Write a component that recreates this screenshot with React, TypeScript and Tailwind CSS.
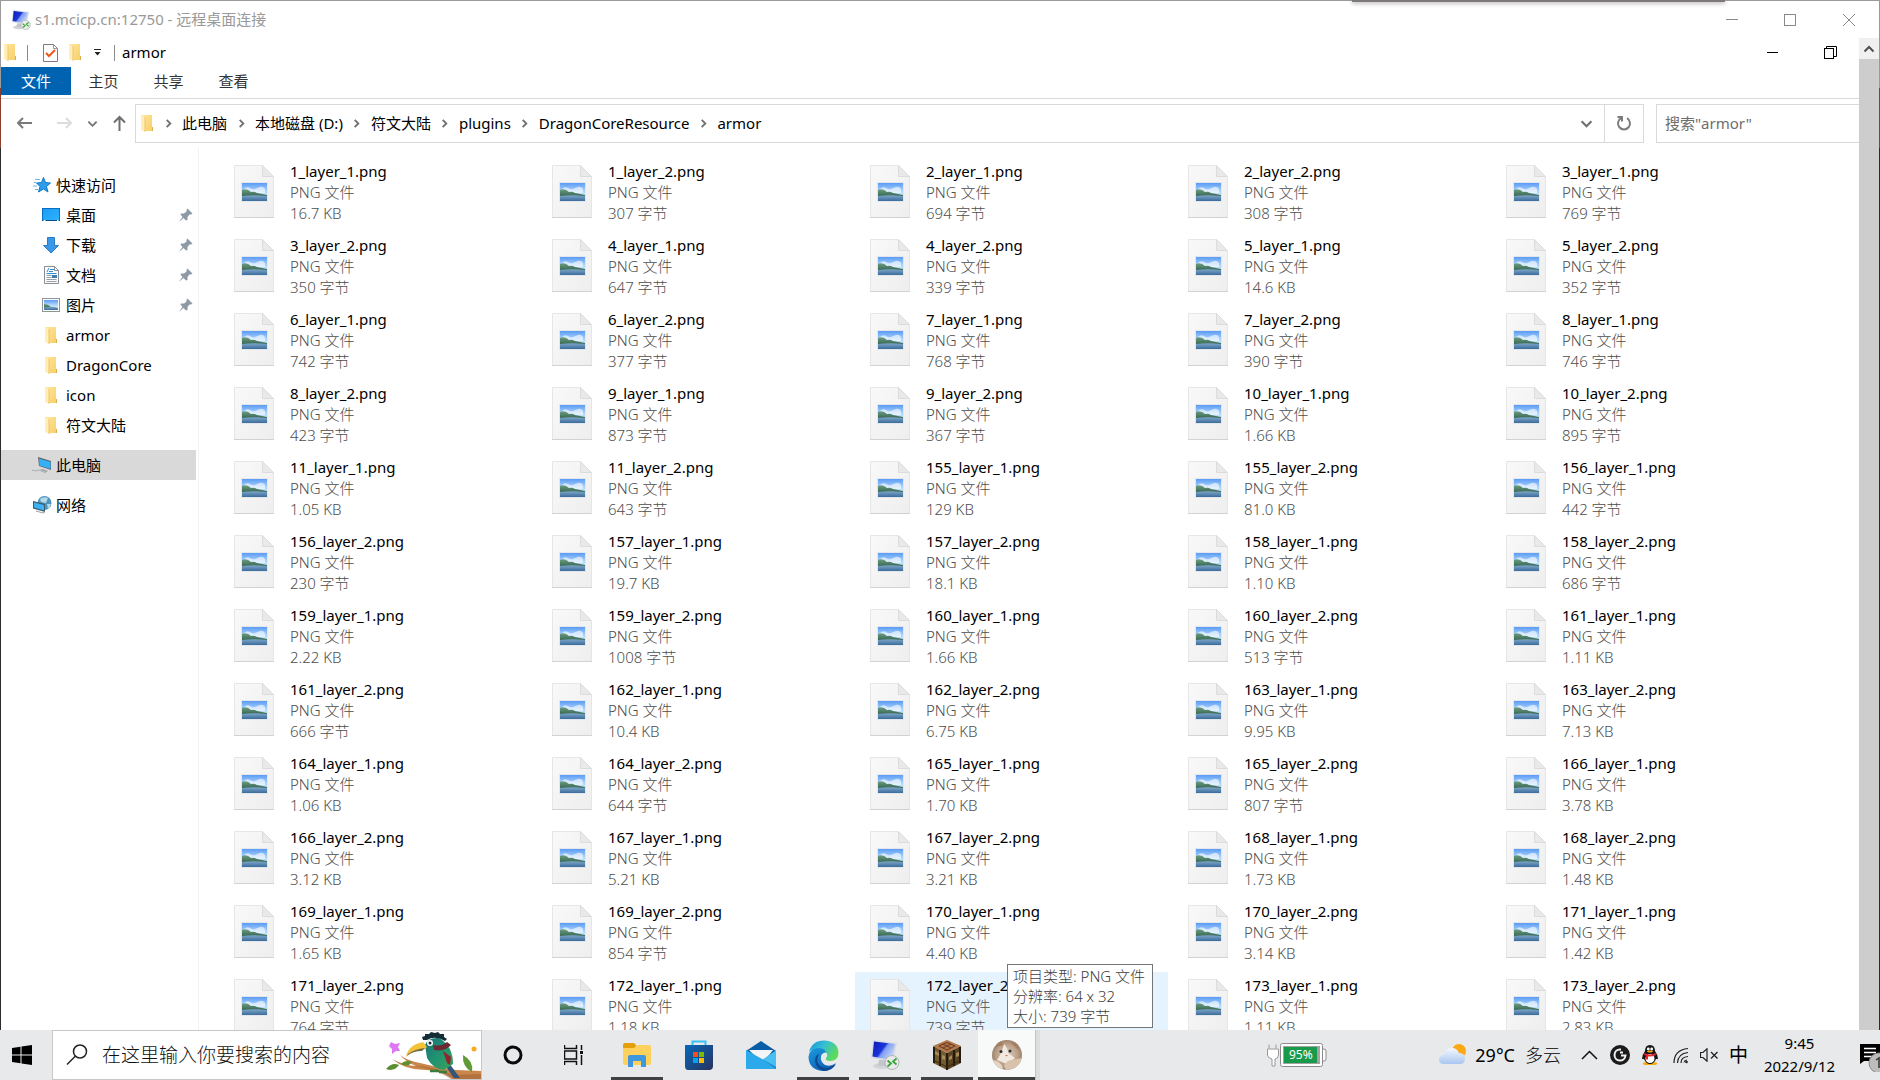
import type { ReactNode } from "react";

const FILES: [string, string][] = [
  ["1_layer_1.png", "16.7 KB"], ["1_layer_2.png", "307 字节"], ["2_layer_1.png", "694 字节"], ["2_layer_2.png", "308 字节"], ["3_layer_1.png", "769 字节"],
  ["3_layer_2.png", "350 字节"], ["4_layer_1.png", "647 字节"], ["4_layer_2.png", "339 字节"], ["5_layer_1.png", "14.6 KB"], ["5_layer_2.png", "352 字节"],
  ["6_layer_1.png", "742 字节"], ["6_layer_2.png", "377 字节"], ["7_layer_1.png", "768 字节"], ["7_layer_2.png", "390 字节"], ["8_layer_1.png", "746 字节"],
  ["8_layer_2.png", "423 字节"], ["9_layer_1.png", "873 字节"], ["9_layer_2.png", "367 字节"], ["10_layer_1.png", "1.66 KB"], ["10_layer_2.png", "895 字节"],
  ["11_layer_1.png", "1.05 KB"], ["11_layer_2.png", "643 字节"], ["155_layer_1.png", "129 KB"], ["155_layer_2.png", "81.0 KB"], ["156_layer_1.png", "442 字节"],
  ["156_layer_2.png", "230 字节"], ["157_layer_1.png", "19.7 KB"], ["157_layer_2.png", "18.1 KB"], ["158_layer_1.png", "1.10 KB"], ["158_layer_2.png", "686 字节"],
  ["159_layer_1.png", "2.22 KB"], ["159_layer_2.png", "1008 字节"], ["160_layer_1.png", "1.66 KB"], ["160_layer_2.png", "513 字节"], ["161_layer_1.png", "1.11 KB"],
  ["161_layer_2.png", "666 字节"], ["162_layer_1.png", "10.4 KB"], ["162_layer_2.png", "6.75 KB"], ["163_layer_1.png", "9.95 KB"], ["163_layer_2.png", "7.13 KB"],
  ["164_layer_1.png", "1.06 KB"], ["164_layer_2.png", "644 字节"], ["165_layer_1.png", "1.70 KB"], ["165_layer_2.png", "807 字节"], ["166_layer_1.png", "3.78 KB"],
  ["166_layer_2.png", "3.12 KB"], ["167_layer_1.png", "5.21 KB"], ["167_layer_2.png", "3.21 KB"], ["168_layer_1.png", "1.73 KB"], ["168_layer_2.png", "1.48 KB"],
  ["169_layer_1.png", "1.65 KB"], ["169_layer_2.png", "854 字节"], ["170_layer_1.png", "4.40 KB"], ["170_layer_2.png", "3.14 KB"], ["171_layer_1.png", "1.42 KB"],
  ["171_layer_2.png", "764 字节"], ["172_layer_1.png", "1.18 KB"], ["172_layer_2.png", "739 字节"], ["173_layer_1.png", "1.11 KB"], ["173_layer_2.png", "2.83 KB"],
];

const CRUMBS = ["此电脑", "本地磁盘 (D:)", "符文大陆", "plugins", "DragonCoreResource", "armor"];

function SharedDefs() {
  return (
    <svg width="0" height="0" className="absolute" aria-hidden="true">
      <defs>
        <linearGradient id="sky" x1="0" y1="0" x2="0" y2="1">
          <stop offset="0" stopColor="#5b9bf5" />
          <stop offset="0.5" stopColor="#b4dafa" />
          <stop offset="1" stopColor="#e2f3ff" />
        </linearGradient>
        <linearGradient id="sea" x1="0" y1="0" x2="0" y2="1">
          <stop offset="0" stopColor="#7ea6c8" />
          <stop offset="1" stopColor="#3a6c9c" />
        </linearGradient>
        <linearGradient id="hill" x1="0" y1="0" x2="0" y2="1">
          <stop offset="0" stopColor="#6b9c80" />
          <stop offset="1" stopColor="#2c5a48" />
        </linearGradient>
        <linearGradient id="paper" x1="0" y1="0" x2="1" y2="1">
          <stop offset="0" stopColor="#f9f9f9" />
          <stop offset="1" stopColor="#eeeeee" />
        </linearGradient>
        <linearGradient id="folder" x1="0" y1="0" x2="1" y2="1">
          <stop offset="0" stopColor="#ffe59c" />
          <stop offset="1" stopColor="#f7cf68" />
        </linearGradient>
        <linearGradient id="blue" x1="0" y1="0" x2="1" y2="1">
          <stop offset="0" stopColor="#1a9cf5" />
          <stop offset="1" stopColor="#2fb2ff" />
        </linearGradient>
        <linearGradient id="screen" x1="0" y1="0" x2="1" y2="0.6">
          <stop offset="0" stopColor="#0a1bb0" />
          <stop offset="0.5" stopColor="#1b35dd" />
          <stop offset="0.6" stopColor="#7f9df2" />
          <stop offset="1" stopColor="#c8d8fb" />
        </linearGradient>
        <linearGradient id="store" x1="0" y1="0" x2="1" y2="1">
          <stop offset="0" stopColor="#0669bb" />
          <stop offset="1" stopColor="#28325c" />
        </linearGradient>
        <linearGradient id="edgeTop" x1="0" y1="0" x2="1" y2="0.5">
          <stop offset="0" stopColor="#1694dc" />
          <stop offset="0.5" stopColor="#35bfd2" />
          <stop offset="1" stopColor="#5fdb5a" />
        </linearGradient>
        <linearGradient id="edgeBody" x1="0" y1="0" x2="0.6" y2="1">
          <stop offset="0" stopColor="#1b9de2" />
          <stop offset="1" stopColor="#0f5fb4" />
        </linearGradient>
        <linearGradient id="cloud" x1="0" y1="0" x2="0" y2="1">
          <stop offset="0" stopColor="#f3f7fe" />
          <stop offset="1" stopColor="#a9c6f0" />
        </linearGradient>
        <linearGradient id="bird" x1="0" y1="0" x2="1" y2="1">
          <stop offset="0" stopColor="#1c6f78" />
          <stop offset="0.5" stopColor="#1f9470" />
          <stop offset="1" stopColor="#3fa05a" />
        </linearGradient>
        <radialGradient id="fur" cx="0.5" cy="0.5" r="0.6">
          <stop offset="0" stopColor="#e2d2c2" />
          <stop offset="0.6" stopColor="#bb9f86" />
          <stop offset="1" stopColor="#86705e" />
        </radialGradient>
        <clipPath id="avatar"><circle cx="15" cy="15" r="15" /></clipPath>
      </defs>
    </svg>
  );
}

function PngIcon() {
  return (
    <svg width="42" height="55" viewBox="0 0 42 55" className="shrink-0" aria-hidden="true">
      <path d="M.5.5H28.5L39.500 11.500V52.500H.5Z" fill="url(#paper)" stroke="#e6e6e6" />
      <path d="M28.500.5V11.500H39.500Z" fill="#e9e9e9" stroke="#dcdcdc" />
      <path d="M0 52.500H40" stroke="#d2d2d2" />
      <rect x="7" y="17" width="27" height="20" fill="#e3e6ea" />
      <rect x="8" y="18" width="25" height="18" fill="url(#sky)" />
      <path d="M10 24q3-3 6-1t5 1 5-2 5 2v4H10Z" fill="#fff" opacity=".6" />
      <path d="M8 25q5-2 9 2 3-1 6 1l10 2v3H8Z" fill="url(#hill)" />
      <path d="M8 31q12-1.500 25 0V36H8Z" fill="url(#sea)" />
    </svg>
  );
}

function FolderIcon() {
  return (
    <svg width="13" height="17" viewBox="0 0 13 17" aria-hidden="true">
      <path d="M0 0H11V12L12 13V16H3Z" fill="url(#folder)" />
      <path d="M0 0L4 2V17L0 15Z" fill="#ffeeb8" />
      <path d="M4 2V17" stroke="#efc768" />
      <path d="M11.500 12v4" stroke="#dcae4c" />
    </svg>
  );
}

function RemoteIcon({ size }: { size: number }) {
  return (
    <svg width={size} height={size} viewBox="0 0 30 30" aria-hidden="true">
      <ellipse cx="12" cy="26" rx="9" ry="3" fill="#d2d4d8" />
      <path d="M9 20h7l1 6H8Z" fill="#c3c6ca" />
      <path d="M3 0L27 3L23 22L1 18Z" fill="#d5dae4" />
      <path d="M4 1.500L25 4L21.500 20L2.500 16.500Z" fill="url(#screen)" />
      <circle cx="22" cy="22.500" r="7" fill="#e9ebea" stroke="#b2b5b4" />
      <path d="M17.500 20.500l3.500 3L17.500 26.500M26.500 18.500L23 21.500l3.500 3" fill="none" stroke="#37a63c" strokeWidth="1.800" />
    </svg>
  );
}

function PinIcon() {
  return (
    <svg width="14" height="14" viewBox="0 0 14 14" className="shrink-0" aria-hidden="true">
      <path d="M8.500.500L13.500 5.500L12 6.500L10.500 6.500L8.500 9L8.500 12L7 12.500L4.500 10L.5 13.500L.5 13L3.500 9L1.500 6.500L2 5.500L5 5.500L7.500 3.500L7.500 2Z" fill="#8d9aa5" />
    </svg>
  );
}

function StarIcon() {
  return (
    <svg width="18" height="16" viewBox="0 0 18 16" aria-hidden="true">
      <path d="M10.500.500L12.500 5.500L17.500 6L13.500 9.500L15 15L10.500 12L5.500 15L7 9.500L3.500 6L8.500 5.500Z" fill="#2d9cea" stroke="#1478c4" />
      <path d="M2 2.500h5M1 5.500h2M0 9h4M2 12.500h3" stroke="#62b6f2" />
    </svg>
  );
}

function DesktopIcon() {
  return (
    <svg width="18" height="14" viewBox="0 0 18 14" aria-hidden="true">
      <rect x=".5" y=".5" width="17" height="12" fill="url(#blue)" stroke="#0a70bd" />
      <path d="M0 12.500h18" stroke="#0b4f86" strokeWidth="1" />
      <path d="M1.500 12.500h2M15 12.500h1.500" stroke="#fff" />
    </svg>
  );
}

function DownloadIcon() {
  return (
    <svg width="16" height="17" viewBox="0 0 16 17" aria-hidden="true">
      <path d="M4.500.500h7v8h4L8 16L.5 8.500h4Z" fill="#3b97e8" stroke="#2a7bc9" />
    </svg>
  );
}

function DocIcon() {
  return (
    <svg width="15" height="18" viewBox="0 0 15 18" aria-hidden="true">
      <path d="M.5.500h10l4 4v13H.5Z" fill="#fbfbfb" stroke="#8b8f93" />
      <path d="M10.500.500v4h4" fill="none" stroke="#8b8f93" />
      <path d="M6 3.500h4M5 5.500h4M2.500 7.500h10" stroke="#2f8fd6" />
      <path d="M3 6l2-4" stroke="#2f8fd6" />
      <path d="M2.500 9.500h5M2.500 11.500h5M2.500 13.500h10M2.500 15.500h10" stroke="#9ba1a6" />
      <rect x="8" y="9" width="5" height="3" fill="#3c7fae" />
    </svg>
  );
}

function PictureIcon() {
  return (
    <svg width="18" height="14" viewBox="0 0 18 14" aria-hidden="true">
      <rect x=".5" y=".5" width="17" height="13" fill="#fff" stroke="#8f9499" />
      <rect x="2" y="2" width="14" height="10" fill="url(#sky)" />
      <path d="M2 6q4 0 7 3l7 1v1H2Z" fill="url(#hill)" />
      <path d="M2 9.500q7-1 14 .5v2H2Z" fill="url(#sea)" />
    </svg>
  );
}

function PcIcon() {
  return (
    <svg width="20" height="17" viewBox="0 0 20 17" aria-hidden="true">
      <path d="M6 0L19 4V13L7 9Z" fill="#5d6468" />
      <path d="M7 1.500L18.500 5V12L7.500 8.500Z" fill="#35b0f8" />
      <path d="M10 12l6 2-2 1-6-2Z" fill="#9aa0a4" />
      <path d="M0 13l4 1 3-1 7 3" fill="none" stroke="#a9b0b6" />
    </svg>
  );
}

function NetworkIcon() {
  return (
    <svg width="19" height="18" viewBox="0 0 19 18" aria-hidden="true">
      <circle cx="11.500" cy="7" r="7" fill="#4f94bb" />
      <path d="M7 3q4-3 8-1l-2 5-5-1ZM14 8l4 0q-1 4-3 5Z" fill="#b3d8e8" />
      <path d="M0 5L12 8V16L0 12.500Z" fill="#3f5a6b" />
      <path d="M1 6.500L11 9V14.500L1 11.500Z" fill="#3cb1f6" />
      <path d="M3 15l7 2 2-1" fill="none" stroke="#9aa3a8" />
    </svg>
  );
}

function Chevron({ dir, size = 12, color = "#707070", width = 2 }: { dir: "down" | "right" | "up"; size?: number; color?: string; width?: number }) {
  const d = dir === "down" ? "M1.500 4L6 8.500L10.500 4" : dir === "up" ? "M1.500 8.500L6 4L10.500 8.500" : "M4 2L8 6L4 10";
  return (
    <svg width={size} height={size} viewBox="0 0 12 12" fill="none" stroke={color} strokeWidth={width} aria-hidden="true">
      <path d={d} />
    </svg>
  );
}

function NavItem({ icon, label, pinned, root, active }: { icon: ReactNode; label: string; pinned?: boolean; root?: boolean; active?: boolean }) {
  const indent = root ? "pl-[31px]" : "pl-[41px]";
  const iconBox = root ? "w-[20px]" : "w-[18px]";
  return (
    <a href="#" className={`flex h-[30px] items-center pr-[3px] ${indent} ${active ? "bg-[#d9d9d9]" : ""}`}>
      <span className={`flex shrink-0 justify-center ${iconBox}`}>{icon}</span>
      <span className={`flex-1 whitespace-nowrap ${root ? "ml-1" : "ml-1.5"}`}>{label}</span>
      {pinned && <PinIcon />}
    </a>
  );
}

function TitleBar() {
  return (
    <header className="flex h-[37px] shrink-0 items-center pl-2.5 text-[#999999]">
      <RemoteIcon size={20} />
      <h1 className="ml-1 flex-1 text-[15px]">s1.mcicp.cn:12750 - 远程桌面连接</h1>
      <button aria-label="最小化" className="flex h-full w-[58px] items-center justify-center">
        <svg width="12" height="12" stroke="#8a8a8a"><path d="M0 5.500H12" /></svg>
      </button>
      <button aria-label="最大化" className="flex h-full w-[58px] items-center justify-center">
        <svg width="12" height="12" fill="none" stroke="#8a8a8a"><rect x=".5" y=".5" width="11" height="11" /></svg>
      </button>
      <button aria-label="关闭" className="flex h-full w-[60px] items-center justify-center">
        <svg width="12" height="12" stroke="#8a8a8a"><path d="M0 0L12 12M12 0L0 12" /></svg>
      </button>
    </header>
  );
}

function QuickBar() {
  return (
    <div className="flex h-[29px] items-center pl-[3px]">
      <FolderIcon />
      <span className="ml-[10px] h-4 w-px bg-[#8a8a8a]" />
      <button aria-label="属性" className="ml-[15px]">
        <svg width="15" height="18" viewBox="0 0 15 18" fill="none">
          <path d="M.5.500h10l4 4v13H.5Z" fill="#fdfdfd" stroke="#7d7d7d" />
          <path d="M10.500.500v4h4" stroke="#9a9a9a" />
          <path d="M3 9l3 3 6-6" stroke="#f0591c" strokeWidth="2" />
        </svg>
      </button>
      <button aria-label="新建文件夹" className="ml-[11px]"><FolderIcon /></button>
      <button aria-label="自定义快速访问工具栏" className="ml-[12px]">
        <svg width="8" height="7" viewBox="0 0 8 7"><path d="M0 .500h7" stroke="#222" /><path d="M.5 3h6L3.500 6.500Z" fill="#222" /></svg>
      </button>
      <span className="ml-[12px] h-4 w-px bg-[#8a8a8a]" />
      <span className="ml-[7px] flex-1 text-[15px] text-black">armor</span>
      <button aria-label="最小化窗口" className="flex h-full w-[58px] items-center justify-center">
        <svg width="12" height="12" stroke="#000"><path d="M1 5.500H12" /></svg>
      </button>
      <button aria-label="还原窗口" className="flex h-full w-[58px] items-center justify-center">
        <svg width="13" height="13" fill="none" stroke="#000"><rect x=".5" y="2.500" width="9" height="10" /><path d="M2.500 2.500V.5H12.500V10.500H10" /></svg>
      </button>
    </div>
  );
}

function AddressBar() {
  return (
    <div className="flex h-[48px] shrink-0 items-center text-[15px] text-black">
      <button aria-label="后退" className="flex w-[48px] justify-center">
        <svg width="16" height="12" fill="none" stroke="#7a7a7a" strokeWidth="2"><path d="M15 6H1M6 1L1 6L6 11" /></svg>
      </button>
      <button aria-label="前进" className="flex w-[29px] justify-center">
        <svg width="16" height="12" fill="none" stroke="#dcdcdc" strokeWidth="2"><path d="M1 6H15M10 1L15 6L10 11" /></svg>
      </button>
      <button aria-label="最近浏览的位置" className="flex w-[29px] justify-center"><Chevron dir="down" size={11} /></button>
      <button aria-label="上移" className="flex w-[24px] justify-center">
        <svg width="13" height="16" fill="none" stroke="#6e6e6e" strokeWidth="2"><path d="M6.500 16V2M1 7.500L6.500 2L12 7.500" /></svg>
      </button>
      <nav aria-label="地址" className="ml-1 flex h-[39px] min-w-0 flex-1 items-center border border-[#d9d9d9] pl-[5px]">
        <FolderIcon />
        {CRUMBS.map((c) => (
          <span key={c} className="flex items-center whitespace-nowrap">
            <span className="flex w-[28px] justify-center"><Chevron dir="right" size={11} /></span>
            <a href="#">{c}</a>
          </span>
        ))}
        <button aria-label="上一个位置" className="ml-auto flex w-9 justify-center"><Chevron dir="down" size={13} /></button>
        <button aria-label="刷新" className="flex h-full w-[39px] items-center justify-center border-l border-[#d9d9d9]">
          <svg width="16" height="16" viewBox="0 0 16 16" fill="none" stroke="#7c7c7c" strokeWidth="2">
            <path d="M11 3.200A6 6 0 1 1 5 3.200" />
            <path d="M1.500 2H6V6.500" />
          </svg>
        </button>
      </nav>
      <input
        aria-label="搜索armor"
        placeholder={'搜索"armor"'}
        className="ml-3 h-[39px] w-[203px] border border-r-0 border-[#d9d9d9] pl-2 outline-none placeholder:text-[#6d6d6d]"
      />
    </div>
  );
}

function Sidebar() {
  return (
    <aside className="w-[198px] shrink-0 border-r border-[#f2f2f2] pt-[23px] pr-0.5 text-[15px] text-black">
      <NavItem root icon={<StarIcon />} label="快速访问" />
      <NavItem pinned icon={<DesktopIcon />} label="桌面" />
      <NavItem pinned icon={<DownloadIcon />} label="下载" />
      <NavItem pinned icon={<DocIcon />} label="文档" />
      <NavItem pinned icon={<PictureIcon />} label="图片" />
      <NavItem icon={<FolderIcon />} label="armor" />
      <NavItem icon={<FolderIcon />} label="DragonCore" />
      <NavItem icon={<FolderIcon />} label="icon" />
      <NavItem icon={<FolderIcon />} label="符文大陆" />
      <div className="py-[10px]"><NavItem root active icon={<PcIcon />} label="此电脑" /></div>
      <NavItem root icon={<NetworkIcon />} label="网络" />
    </aside>
  );
}

function FileGrid() {
  return (
    <ul className="grid flex-1 grid-cols-[repeat(auto-fill,313px)] content-start gap-x-[5px] overflow-hidden pt-[11px] pl-5">
      {FILES.map(([name, size]) => {
        const hovered = name === "172_layer_2.png";
        return (
          <li key={name} className={`relative flex h-[74px] pl-[15px] ${hovered ? "bg-[#e5f3ff]" : ""}`}>
            <div className="pt-[7px]"><PngIcon /></div>
            <div className="ml-[14px] pt-[3px] text-[15px] leading-[21px] whitespace-nowrap text-black">
              <p>{name}</p>
              <p className="font-light text-[#4d4d4d]">PNG 文件</p>
              <p className="font-light text-[#4d4d4d]">{size}</p>
            </div>
            {hovered && (
              <div role="tooltip" className="absolute -top-2 left-[152px] z-10 border border-[#767676] bg-white py-px pr-[7px] pl-[5px] text-[15px] leading-[20px] font-light whitespace-nowrap text-[#3d3d3d]">
                <p>项目类型: PNG 文件</p>
                <p>分辨率: 64 x 32</p>
                <p>大小: 739 字节</p>
              </div>
            )}
          </li>
        );
      })}
    </ul>
  );
}

function BirdArt() {
  return (
    <svg width="96" height="48" viewBox="0 0 96 48" className="shrink-0" aria-hidden="true">
      <path d="M15 24q8 6 20 8 20 5 36 7l25 1v8H68q-12-9-28-9-20 0-33-11 14 7 24 7-10-4-16-11Z" fill="#c9874c" />
      <path d="M30 35q18 0 38 9l28-1v5H66q-14-10-38-13Z" fill="#9c5d2d" opacity=".5" />
      <path d="M1 38q6-7 13-4-5 7-13 4ZM16 33q4-5 11-2-4 6-11 2Z" fill="#5d8f30" />
      <path d="M78 24q11 6 9 17-10-5-9-17Z" fill="#5f9a35" />
      <path d="M6 11l4 2 5-1-2 4 2 4-4 0-4 3 0-5-3-3Z" fill="#dd79f2" />
      <circle cx="89" cy="18" r="2.500" fill="#fba91c" />
      <path d="M61 28l14 19h-6l-10-14Z" fill="#34557a" />
      <path d="M40 14q3-8 14-7 14 8 14 26l-9 6q-11-1-17-12Z" fill="url(#bird)" />
      <path d="M48 14q8 2 14-3l4 3q-6 7-17 5Z" fill="#6d2a33" /><path d="M58 20l8 6-1 8-3-2Z" fill="#8d2630" />
      <path d="M38 9l-1-3 3-1 0-2 4 0 2-2 4 1 3-1 2 2 4 0 0 3 3 2-2 2q-10-6-18-1Z" fill="#152d36" />
      <path d="M21 26q2-12 17-15l4 5q-4 4-10 4-7 1-11 6Z" fill="#f5c136" />
      <path d="M23 23q7-5 17-6l-3 3q-9 0-15 5Z" fill="#3d4436" opacity=".7" />
      <circle cx="45" cy="12" r="3" fill="#fff" />
      <circle cx="45" cy="12" r="1.500" fill="#15262f" />
      <path d="M45 40h9M54 41h8" stroke="#3b7c3c" strokeWidth="2.500" />
    </svg>
  );
}

function TaskButton({ label, running, children }: { label: string; running?: boolean; children: ReactNode }) {
  return (
    <button aria-label={label} className="relative flex h-[50px] w-[62px] items-center justify-center">
      {children}
      {running && <span className="absolute inset-x-[5px] bottom-0 h-[3px] bg-[#414141]" />}
    </button>
  );
}

function Taskbar() {
  return (
    <footer className="flex h-[50px] shrink-0 items-center overflow-hidden bg-[#e8e9ea] text-black">
      <button aria-label="开始" className="flex h-full w-[52px] items-center pl-3">
        <svg width="20" height="20" viewBox="0 0 20 20"><path d="M0 3L8.500 1.700V9.500H0ZM9.500 1.500L20 0V9.500H9.500ZM0 10.500H8.500V18.300L0 17ZM9.500 10.500H20V20L9.500 18.500Z" /></svg>
      </button>
      <div className="flex h-full w-[430px] items-center border border-[#c8c8c8] bg-white pl-[13px]">
        <svg width="22" height="22" viewBox="0 0 22 22" fill="none" stroke="#222" strokeWidth="1.500" aria-hidden="true"><circle cx="14" cy="7.500" r="6.500" /><path d="M9.500 12L1 20.500" /></svg>
        <input aria-label="搜索" placeholder="在这里输入你要搜索的内容" className="ml-[14px] min-w-0 flex-1 bg-transparent text-[19px] font-light outline-none placeholder:text-[#111]" />
        <BirdArt />
      </div>
      <TaskButton label="Cortana"><svg width="20" height="20" fill="none" stroke="#0a0a0a" strokeWidth="3"><circle cx="10" cy="10" r="8" /></svg></TaskButton>
      <TaskButton label="任务视图">
        <svg width="22" height="20" viewBox="0 0 22 20" fill="none" stroke="#111" strokeWidth="1.500">
          <path d="M.5 0V3.500H12.500V0M.5 20V16.500H12.500V20M.5 6H12.500V14H.5ZM17.500 0V5M17.500 10V20" />
          <path d="M16 7.500h3" strokeWidth="3" />
        </svg>
      </TaskButton>
      <TaskButton label="文件资源管理器" running>
        <svg width="28" height="24" viewBox="0 0 28 24">
          <path d="M0 2q0-2 2-2h9l2 2v4H0Z" fill="#e3a008" />
          <path d="M0 5h11l3-3h12q2 0 2 2v16q0 2-2 2H2q-2 0-2-2Z" fill="#fdd15c" />
          <path d="M5 24V14q0-2 2-2h14q2 0 2 2v10h-5v-6h-8v6Z" fill="#3f97dd" />
        </svg>
      </TaskButton>
      <TaskButton label="Microsoft Store">
        <svg width="30" height="30" viewBox="0 0 30 30">
          <path d="M8.500 6V1.500H21.500V6" fill="none" stroke="#35c1f1" strokeWidth="2" />
          <path d="M1 5H29V26q0 4-4 4H4Q1 30 1 26Z" fill="url(#store)" />
          <rect x="9" y="12" width="5" height="5" fill="#f25022" /><rect x="15" y="12" width="5" height="5" fill="#7fba00" />
          <rect x="9" y="18" width="5" height="5" fill="#00a4ef" /><rect x="15" y="18" width="5" height="5" fill="#ffb900" />
        </svg>
      </TaskButton>
      <TaskButton label="邮件">
        <svg width="30" height="30" viewBox="0 0 30 30">
          <path d="M0 11L15 1L30 11V16H0Z" fill="#0a5ea8" />
          <path d="M3 10H27L20 19H12Z" fill="#f4f4f6" />
          <path d="M0 10L17 19.500L30 10.500V29H0Z" fill="#2ba9ea" />
          <path d="M30 10.500V29L17 19.500Z" fill="#48bff0" />
          <path d="M30 29L17 19.500L30 27Z" fill="#1580cf" />
        </svg>
      </TaskButton>
      <TaskButton label="Microsoft Edge" running>
        <svg width="31" height="31" viewBox="0 0 31 31">
          <path d="M.5 17Q2 7 12 7q8 0 8 6-5-2-7 3-1 6 4 9 6 2 11-2-4 8-13 8Q1 30 .5 17Z" fill="url(#edgeBody)" />
          <path d="M1 12Q4 .5 16 .500 30 1 30.500 13 30 21 22 21q-5 0-4-3 2-2 1-4-2-6-8-6-6 0-10 4Z" fill="url(#edgeTop)" />
          <path d="M11 14q-4 7 1 12 7 5 16-2-4 7-12 7Q8 29 7 21q0-6 4-7Z" fill="#0d4a92" />
        </svg>
      </TaskButton>
      <TaskButton label="远程桌面连接" running><RemoteIcon size={30} /></TaskButton>
      <TaskButton label="Minecraft" running>
        <svg width="28" height="30" viewBox="0 0 28 30">
          <path d="M14 0L28 6L14 13L0 6Z" fill="#b3774b" />
          <path d="M14 2.500L22 6L14 10L6 6ZM10 4l8 4M18 4l-8 4" fill="none" stroke="#6b3c22" />
          <path d="M0 6L14 13V30L0 23Z" fill="#75592f" />
          <path d="M28 6L14 13V30L28 23Z" fill="#5a4323" />
          <path d="M1 7V23M7 10V26M14 13V30M21 10V26M27 7V23" stroke="#231a10" strokeWidth="2" />
          <path d="M2 11l4 2v3l-4-2ZM9 15l3 1v4l-3-1ZM16 17l3-2v4l-3 1ZM23 13l3-1v4l-3 1Z" fill="#a98b56" />
          <path d="M0 20l14 7 14-7" fill="none" stroke="#33240f" />
        </svg>
      </TaskButton>
      <div className="flex border-r-4 border-[#dcdddd]">
        <button aria-label="聊天" className="relative flex h-[50px] w-[58px] items-center justify-center border-r border-[#c3c3c3] bg-white/70">
          <svg width="30" height="30" viewBox="0 0 30 30">
            <g clipPath="url(#avatar)">
              <rect width="30" height="30" fill="url(#fur)" />
              <path d="M3 7L7 0 12 5ZM19 3l7-1 1 8Z" fill="#a67f63" />
              <path d="M12 4q4 4 4 9l7 5-8 6-10-4q5-7 7-16Z" fill="#f1e8df" />
              <path d="M12 26q3-7 9-6l8-2v12H14Z" fill="#d8c2ac" />
              <path d="M0 20q8 0 11 8l-2 2H0Z" fill="#e3d5c6" />
            </g>
            <circle cx="9" cy="11.500" r="1.500" fill="#27303a" /><circle cx="18" cy="11" r="1.500" fill="#27303a" />
            <path d="M13 15h3l-1.500 1.500Z" fill="#c4776c" />
          </svg>
          <span className="absolute inset-x-0 bottom-0 h-[3px] bg-[#414141]" />
        </button>
      </div>

      <div className="ml-auto flex h-full shrink-0 items-center">
        <div className="relative mr-[112px]">
          <svg width="61" height="24" viewBox="0 0 61 24" aria-hidden="true">
            <path d="M3 1.500v4M10 1.500v4M1.500 6H12.500V12Q12 16 9 16V23H6V16Q1.500 15 1.500 12Z" fill="#fff" stroke="#9a9a9a" />
            <path d="M55 6h3q2 0 2 2v8q0 2-2 2h-3Z" fill="#fff" stroke="#8b8b8b" />
            <rect x="14.500" y=".5" width="42" height="23" rx="2" fill="#fff" stroke="#8b8b8b" />
            <rect x="17" y="3" width="37" height="18" fill="#a3a3a3" />
            <rect x="18" y="4" width="33" height="16" fill="#189a4a" />
          </svg>
          <span className="absolute inset-y-0 left-[18px] flex w-[33px] items-center justify-center text-[12px] text-white">95%</span>
        </div>
        <button className="flex items-center text-[18px] whitespace-nowrap">
          <svg width="28" height="22" viewBox="0 0 28 22" aria-hidden="true">
            <circle cx="20" cy="7" r="7" fill="#fba815" />
            <path d="M5 20Q0 20 0 15.500T5 11q1-7 8-7 5 0 7 5 6 0 6 5.500T21 20Z" fill="url(#cloud)" />
          </svg>
          <span className="ml-[8px]">29°C</span>
          <span className="ml-[10px] font-light">多云</span>
        </button>
        <button aria-label="显示隐藏的图标" className="ml-[20px]">
          <svg width="17" height="10" fill="none" stroke="#111" strokeWidth="1.500"><path d="M1 9L8.500 1.500L16 9" /></svg>
        </button>
        <svg className="ml-[12px]" width="20" height="20" viewBox="0 0 20 20" fill="none" aria-hidden="true">
          <circle cx="10" cy="10" r="10" fill="#1b1b1b" />
          <path d="M11 4.500H10a5.500 5.500 0 1 0 5.500 6H11" stroke="#f1f1f1" strokeWidth="2" />
          <path d="M10 7.500h3" stroke="#f1f1f1" strokeWidth="2" />
        </svg>
        <svg className="ml-[12px]" width="16" height="20" viewBox="0 0 16 20" aria-hidden="true">
          <ellipse cx="5" cy="18.500" rx="4" ry="1.500" fill="#f7a90e" /><ellipse cx="11" cy="18.500" rx="4" ry="1.500" fill="#f7a90e" />
          <path d="M3 6q0-6 5-6t5 6q3 4 3 8l-2 0q-2 5-6 5t-6-5l-2 0q0-4 3-8Z" fill="#151515" />
          <ellipse cx="8" cy="13.500" rx="4.500" ry="4.500" fill="#fff" />
          <circle cx="6.300" cy="4" r="1.400" fill="#fff" /><circle cx="9.700" cy="4" r="1.400" fill="#fff" />
          <ellipse cx="8" cy="6.500" rx="3" ry="1" fill="#f7a90e" />
          <path d="M2.500 8q5.500 3 11 0l.5 2q-4 2-8 1.500v3H4v-4l-2-.500Z" fill="#e6262c" />
        </svg>
        <svg className="ml-[15px]" width="16" height="17" viewBox="0 0 16 17" fill="none" stroke="#222" aria-hidden="true">
          <path d="M1 16Q1 3 15 1.500M4.500 16Q5 6.500 15 5.500M8 16Q8 10 15 9.500" strokeWidth="1.200" />
          <path d="M11 15.500Q11 13 14 13" /><circle cx="13.500" cy="15" r="1.300" fill="#222" stroke="none" />
        </svg>
        <svg className="ml-[11px]" width="19" height="14" viewBox="0 0 19 14" fill="none" stroke="#222" aria-hidden="true">
          <path d="M.5 4.500H3L7 .800V13.200L3 9.500H.5Z" strokeWidth="1.200" /><path d="M11 4L17.500 10.500M17.500 4L11 10.500" strokeWidth="1.300" />
        </svg>
        <span className="ml-[10px] text-[19px]">中</span>
        <div className="w-[103px] text-center text-[15px] leading-[23px]">
          <p>9:45</p>
          <p>2022/9/12</p>
        </div>
        <button aria-label="通知" className="ml-[9px]">
          <svg width="20" height="34" viewBox="0 0 20 34">
            <path d="M0 6H20V23H4L0 26Z" fill="#000" />
            <path d="M4 10.500H16M4 14.500H16M4 18.500H12" stroke="#fff" strokeWidth="1.500" />
            <circle cx="19" cy="25" r="10" fill="#bdbdbd" stroke="#8c8c8c" />
            <path d="M16 22l3-2v10" fill="none" stroke="#333" strokeWidth="1.500" />
          </svg>
        </button>
      </div>
    </footer>
  );
}

function Rail() {
  return (
    <div className="flex w-px shrink-0 flex-col">
      <span className="h-[88px] bg-[#9a9a9a]" />
      <span className="h-[60px] bg-[#8a3f2c]" />
      <span className="flex-1 bg-[#2b2b30]" />
    </div>
  );
}

export default function App() {
  return (
    <div className="relative flex h-screen flex-col overflow-hidden bg-white font-['Noto_Sans','Noto_Sans_CJK_SC',sans-serif]">
      <SharedDefs />
      <div className="absolute top-0 right-[155px] h-0.5 w-[373px] bg-[#7d797b] shadow-[0_1px_4px_#8a8a8a]" />
      <div className="flex min-h-0 flex-1">
        <Rail />
        <div className="flex min-w-0 flex-1 flex-col border-t border-[#9a9a9a]">
          <TitleBar />
          <div className="flex min-h-0 flex-1">
            <div className="flex min-w-0 flex-1 flex-col">
              <QuickBar />
              <div className="flex h-[32px] shrink-0 items-start border-b border-[#d9d9d9] text-[15px] leading-[28px] text-[#333]">
                <button className="w-[70px] bg-[#0063b1] text-white">文件</button>
                <button className="w-[65px]">主页</button>
                <button className="w-[65px]">共享</button>
                <button className="w-[65px]">查看</button>
              </div>
              <AddressBar />
              <div className="flex min-h-0 flex-1">
                <Sidebar />
                <FileGrid />
              </div>
            </div>
            <div className="flex w-[20px] shrink-0 flex-col bg-[#cdcdcd]">
              <button aria-label="向上滚动" className="flex h-[21px] items-center justify-center bg-[#f0f0f0]"><Chevron dir="up" size={12} color="#505050" /></button>
            </div>
          </div>
        </div>
        <Rail />
      </div>
      <Taskbar />
    </div>
  );
}
